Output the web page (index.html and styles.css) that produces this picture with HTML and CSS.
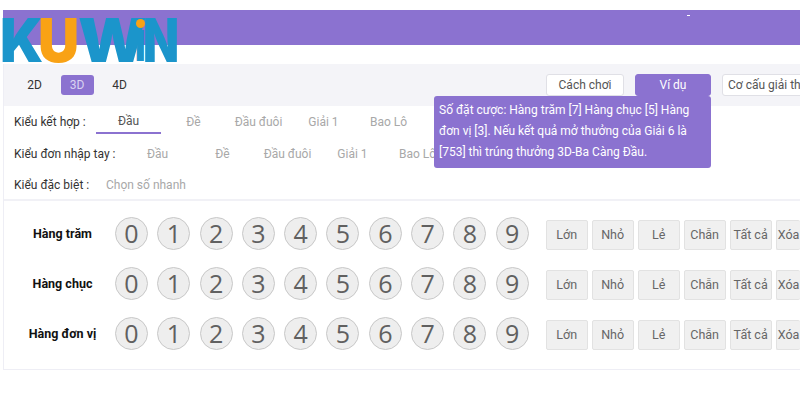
FILE: index.html
```html
<!DOCTYPE html>
<html lang="vi">
<head>
    <meta charset="UTF-8">
    <title>KUWIN 3D</title>
    <link rel="stylesheet" href="styles.css">
</head>
<body>
    <div class="logo"><span class="k">K</span><span class="u">U</span><span class="w">W</span><span class="i">I</span><span class="n">N</span><b class="dot"></b></div>
    <div class="banner"><span class="dash"></span></div>
    <div class="panel">
        <div class="topbar">
            <div class="modes">
                <span class="mode">2D</span>
                <span class="mode active">3D</span>
                <span class="mode">4D</span>
            </div>
            <div class="actions">
                <span class="btn">Cách chơi</span>
                <span class="btn primary">Ví dụ
                    <span class="tip">Số đặt cược: Hàng trăm [7] Hàng chục [5] Hàng đơn vị [3]. Nếu kết quả mở thưởng của Giải 6 là [753] thì trúng thưởng 3D-Ba Càng Đầu.</span>
                </span>
                <span class="btn wide">Cơ cấu giải thưởng</span>
            </div>
        </div>
        <div class="types">
            <div class="type-row first">
                <span class="type-label">Kiểu kết hợp :</span>
                <span class="tab on">Đầu</span>
                <span class="tab">Đề</span>
                <span class="tab">Đầu đuôi</span>
                <span class="tab">Giải 1</span>
                <span class="tab">Bao Lô</span>
            </div>
            <div class="type-row second">
                <span class="type-label">Kiểu đơn nhập tay :</span>
                <span class="tab">Đầu</span>
                <span class="tab">Đề</span>
                <span class="tab">Đầu đuôi</span>
                <span class="tab">Giải 1</span>
                <span class="tab">Bao Lô</span>
            </div>
            <div class="type-row third">
                <span class="type-label">Kiểu đặc biệt :</span>
                <span class="tab quick">Chọn số nhanh</span>
            </div>
        </div>
        <div class="picker">
            <div class="pick-row">
                <span class="pick-label">Hàng trăm</span>
                <div class="balls"><span>0</span><span>1</span><span>2</span><span>3</span><span>4</span><span>5</span><span>6</span><span>7</span><span>8</span><span>9</span></div>
                <div class="filters"><span>Lớn</span><span>Nhỏ</span><span>Lẻ</span><span>Chẵn</span><span>Tất cả</span><span>Xóa</span></div>
            </div>
            <div class="pick-row">
                <span class="pick-label">Hàng chục</span>
                <div class="balls"><span>0</span><span>1</span><span>2</span><span>3</span><span>4</span><span>5</span><span>6</span><span>7</span><span>8</span><span>9</span></div>
                <div class="filters"><span>Lớn</span><span>Nhỏ</span><span>Lẻ</span><span>Chẵn</span><span>Tất cả</span><span>Xóa</span></div>
            </div>
            <div class="pick-row">
                <span class="pick-label">Hàng đơn vị</span>
                <div class="balls"><span>0</span><span>1</span><span>2</span><span>3</span><span>4</span><span>5</span><span>6</span><span>7</span><span>8</span><span>9</span></div>
                <div class="filters"><span>Lớn</span><span>Nhỏ</span><span>Lẻ</span><span>Chẵn</span><span>Tất cả</span><span>Xóa</span></div>
            </div>
        </div>
    </div>
</body>
</html>
```

FILE: styles.css
```css
* {
    padding: 0;
    margin: 0;
    box-sizing: border-box;
}
html, body {
    height: 400px;
    overflow: hidden;
}
body {
    background-color: #ffffff;
    font-family: 'Roboto', sans-serif;
    font-size: 12px;
    color: #444444;
    padding: 10px 0 0 3px;
    position: relative;
}
.logo {
    position: absolute;
    left: 0;
    top: 12px;
    width: 180px;
    height: 56px;
    font-family: 'Inter', sans-serif;
    font-weight: 900;
    font-size: 60px;
    line-height: 56px;
    color: #1b95cb;
    white-space: nowrap;
    z-index: 2;
}
.logo span {
    position: absolute;
    top: 0;
    transform-origin: 0 50%;
}
.logo .k { left: 0; transform: scaleX(0.95); }
.logo .u { left: 38px; color: #f9a215; transform: scaleX(0.95); }
.logo .w { left: 78px; transform: scaleX(1.06); }
.logo .i { left: 135px; transform-origin: 0 84%; transform: scale(0.6, 0.7); }
.logo .n { left: 143px; transform: scaleX(0.78); }
.logo .dot {
    position: absolute;
    left: 136px;
    top: 7px;
    width: 9px;
    height: 9px;
    border-radius: 50%;
    background-color: #f9a215;
}
.banner {
    height: 35px;
    background-color: #8b72d0;
    position: relative;
}
.dash {
    position: absolute;
    left: 684px;
    top: 5px;
    width: 3px;
    height: 1px;
    background-color: #ffffff;
}
.panel {
    margin-top: 19px;
    height: 306px;
    border: 1px solid #eeeef5;
    border-top: none;
    border-right: none;
}
.topbar {
    height: 42px;
    background-color: #f4f4f8;
    display: flex;
    justify-content: space-between;
    align-items: center;
    padding: 0 0 1px 14px;
}
.modes {
    display: flex;
    gap: 9.5px;
}
.mode {
    width: 33px;
    height: 20px;
    line-height: 20px;
    text-align: center;
    color: #333333;
    border-radius: 3px;
}
.mode.active {
    background-color: #8b72d0;
    color: #d9d2f0;
}
.actions {
    display: flex;
    align-items: center;
    gap: 11px;
    width: 254px;
    flex-shrink: 0;
    white-space: nowrap;
}
.btn {
    height: 22px;
    line-height: 20px;
    text-align: center;
    width: 78px;
    background-color: #ffffff;
    border: 1px solid #e0e0e6;
    border-radius: 3px;
    color: #555555;
    position: relative;
    flex-shrink: 0;
}
.btn.primary {
    width: 76px;
    background-color: #8b72d0;
    border-color: #8b72d0;
    color: #ffffff;
}
.btn.wide {
    width: 130px;
    text-align: left;
    padding-left: 5px;
}
.tip {
    position: absolute;
    right: -1px;
    top: 21px;
    width: 277px;
    height: 72px;
    padding: 4px 5px;
    background-color: #8b72d0;
    border-radius: 3px;
    color: #ffffff;
    text-align: left;
    white-space: normal;
    line-height: 21px;
    font-size: 12px;
    z-index: 3;
}
.types {
    height: 95px;
    border-bottom: 2px solid #f1f1f6;
    padding-left: 10px;
}
.type-row {
    display: flex;
    align-items: center;
    height: 32px;
}
.type-row.third {
    height: 29px;
}
.type-label {
    color: #333333;
    white-space: nowrap;
}
.first .type-label { width: 82px; }
.second .type-label { width: 111px; }
.third .type-label { width: 92px; }
.tab {
    width: 65px;
    text-align: center;
    white-space: nowrap;
    color: #a8a8a8;
    flex-shrink: 0;
}
.tab.quick {
    width: auto;
}
.tab.on {
    align-self: flex-start;
    height: 28px;
    line-height: 31px;
    color: #555555;
    border-bottom: 2px solid #8b72d0;
}
.picker {
    padding-top: 7px;
}
.pick-row {
    display: flex;
    align-items: center;
    height: 50px;
}
.pick-label {
    width: 111px;
    padding-left: 6px;
    font-weight: 700;
    font-size: 12.5px;
    color: #111111;
    white-space: nowrap;
    text-align: center;
    flex-shrink: 0;
}
.balls {
    display: flex;
    gap: 9.3px;
}
.balls span {
    width: 33px;
    height: 33px;
    line-height: 31px;
    text-align: center;
    border-radius: 50%;
    background-color: #eeeeee;
    border: 1px solid #c8c8c8;
    font-size: 25px;
    font-family: 'Open Sans', sans-serif;
    color: #606060;
}
.filters {
    margin: 4px 0 0 17px;
    display: flex;
    gap: 4px;
    font-size: 12.5px;
}
.filters span {
    width: 42px;
    height: 30px;
    line-height: 28px;
    text-align: center;
    background-color: #f0f0f0;
    border: 1px solid #e2e2e2;
    border-radius: 2px;
    color: #666666;
    white-space: nowrap;
    flex-shrink: 0;
}
.filters span:last-child {
    width: 24px;
    text-align: left;
    padding-left: 1px;
    border-right: none;
}
```
